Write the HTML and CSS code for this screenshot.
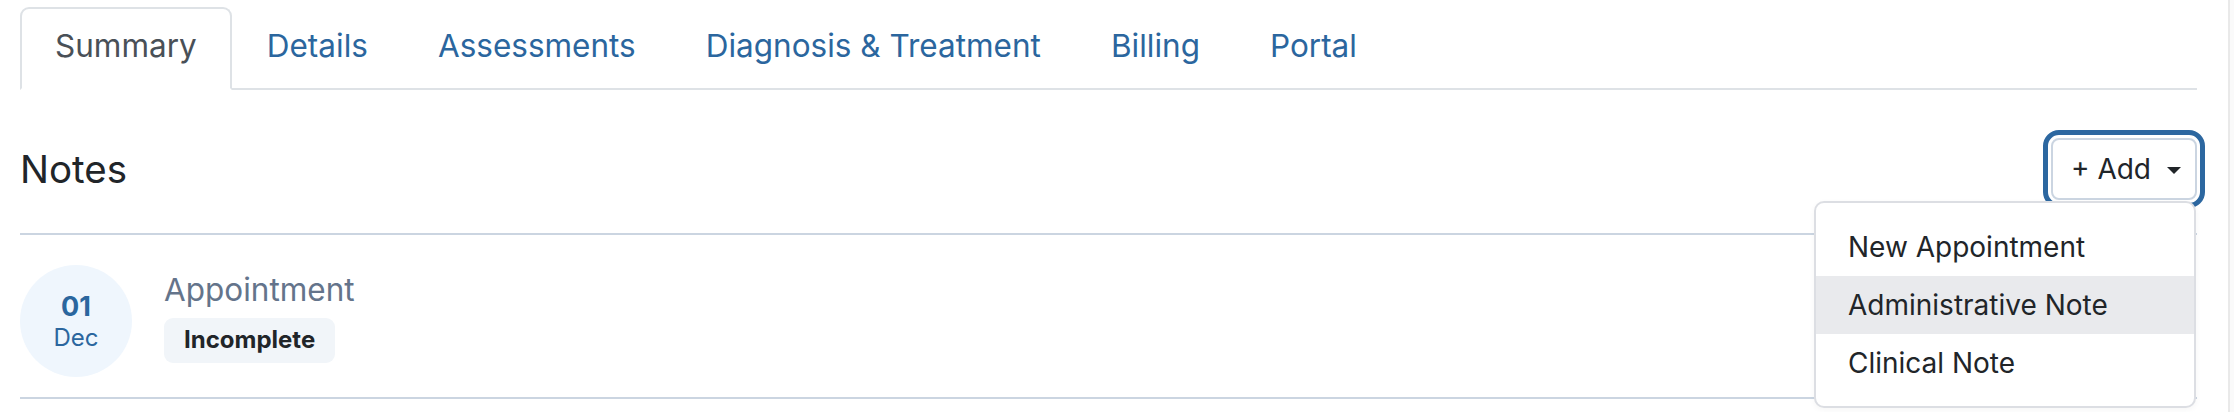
FILE: index.html
```html
<!DOCTYPE html>
<html lang="en">
<head>
<meta charset="utf-8">
<title>Notes</title>
<link rel="stylesheet" href="styles.css">
</head>
<body>
<div class="page">
  <main class="main">
    <nav class="tabs">
      <a class="tab active">Summary</a>
      <a class="tab">Details</a>
      <a class="tab">Assessments</a>
      <a class="tab">Diagnosis &amp; Treatment</a>
      <a class="tab">Billing</a>
      <a class="tab">Portal</a>
    </nav>

    <section class="notes">
      <header class="notes-header">
        <h2 class="notes-title">Notes</h2>
        <div class="dropdown">
          <button class="add-btn">+ Add<span class="caret"></span></button>
          <ul class="menu">
            <li class="menu-item">New Appointment</li>
            <li class="menu-item hover">Administrative Note</li>
            <li class="menu-item">Clinical Note</li>
          </ul>
        </div>
      </header>

      <div class="note-row">
        <div class="date-circle">
          <span class="day">01</span>
          <span class="month">Dec</span>
        </div>
        <div class="note-body">
          <div class="note-type">Appointment</div>
          <span class="badge">Incomplete</span>
        </div>
      </div>
    </section>
  </main>
  <div class="gutter"></div>
</div>
</body>
</html>
```

FILE: styles.css
```css
* { box-sizing: border-box; }

html, body {
  margin: 0;
  padding: 0;
  background: #ffffff;
}

body {
  font-family: Inter, "Noto Sans", "Liberation Sans", sans-serif;
  color: #212529;
  height: 412px;
  overflow: hidden;
}

.page {
  display: flex;
  height: 412px;
}

.main {
  width: 2228px;
  padding: 7px 31px 0 20px;
}

.gutter {
  flex: 1;
  border-left: 2px solid #e9e9e9;
  background: #fafafa;
}

/* Tabs */
.tabs {
  display: flex;
  border-bottom: 2px solid #dee2e6;
}

.tab {
  display: block;
  font-size: 31.5px;
  line-height: 47px;
  padding: 13px 33px 19px;
  color: #2b669e;
  border: 2px solid transparent;
  border-top-left-radius: 9px;
  border-top-right-radius: 9px;
  margin-bottom: -2px;
  text-decoration: none;
}

.tab.active {
  color: #495057;
  border-color: #dee2e6 #dee2e6 #ffffff;
  background: #ffffff;
}

/* Notes header */
.notes-header {
  display: flex;
  align-items: center;
  justify-content: space-between;
  margin-top: 48px;
  padding-bottom: 33px;
  border-bottom: 2px solid #cbd5e1;
}

.notes-title {
  margin: 0;
  font-size: 38.5px;
  font-weight: 400;
  line-height: 1.2;
  color: #212529;
}

.dropdown {
  position: relative;
}

.add-btn {
  display: flex;
  align-items: center;
  height: 62px;
  padding: 0 14px 0 18px;
  font-family: inherit;
  font-size: 28px;
  line-height: 42px;
  color: #212529;
  background: #ffffff;
  border: 2px solid #cbd5e1;
  border-radius: 8px;
  outline: 5px solid #2c67a0;
  outline-offset: 3px;
}

.caret {
  display: inline-block;
  margin-left: 16px;
  margin-top: 2px;
  border-left: 7px solid transparent;
  border-right: 7px solid transparent;
  border-top: 7px solid #212529;
}

.menu {
  position: absolute;
  right: 1px;
  top: 63px;
  width: 382px;
  margin: 0;
  padding: 15px 0 14px;
  list-style: none;
  background: #ffffff;
  border: 2px solid #dcdee3;
  border-radius: 10px;
  box-shadow: 0 2px 6px rgba(0, 0, 0, 0.04);
  z-index: 10;
}

.menu-item {
  font-size: 28px;
  line-height: 42px;
  padding: 8px 32px;
  color: #212529;
  white-space: nowrap;
}

.menu-item.hover {
  background: #e9eaed;
}

/* Note row */
.note-row {
  display: flex;
  align-items: flex-start;
  gap: 32px;
  padding: 30px 0 20px;
  border-bottom: 2px solid #cbd5e1;
}

.date-circle {
  width: 112px;
  height: 112px;
  border-radius: 50%;
  background: #eff6fd;
  display: flex;
  flex-direction: column;
  align-items: center;
  justify-content: center;
  color: #2b669e;
  line-height: 1.2;
}

.day {
  font-size: 27px;
  font-weight: 700;
  margin-top: 2px;
}

.month {
  font-size: 24px;
  font-weight: 400;
}

.note-body {
  display: flex;
  flex-direction: column;
  align-items: flex-start;
  padding-top: 6px;
  gap: 9px;
}

.note-type {
  font-size: 31.5px;
  line-height: 1.2;
  color: #64748b;
}

.badge {
  display: inline-block;
  font-size: 24px;
  font-weight: 700;
  line-height: 1.2;
  padding: 8px 20px;
  color: #212529;
  background: #f1f5f9;
  border-radius: 9px;
}
```
